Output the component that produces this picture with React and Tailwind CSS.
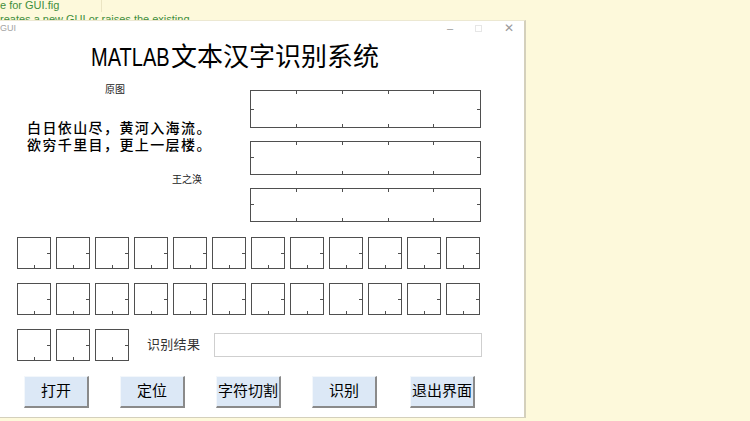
import React from "react";

const CJK = "font-['Liberation_Sans','Noto_Sans_CJK_SC',sans-serif]";

// plot area with inward tick marks, like an empty MATLAB axes
function Axes({ w, h, xs = [], ys = [], top = true, left = true }) {
  return (
    <div
      className="relative shrink-0 border border-[#4f4f4f] bg-white"
      style={{ width: w, height: h }}
    >
      <svg
        className="pointer-events-none absolute inset-0"
        width={w - 2}
        height={h - 2}
        stroke="#4f4f4f"
        strokeWidth="1"
      >
        {xs.map((x) => (
          <g key={"x" + x}>
            {top && <line x1={x + 0.5} y1={0} x2={x + 0.5} y2={3} />}
            <line x1={x + 0.5} y1={h - 2} x2={x + 0.5} y2={h - 5} />
          </g>
        ))}
        {ys.map((y) => (
          <g key={"y" + y}>
            {left && <line x1={0} y1={y + 0.5} x2={3} y2={y + 0.5} />}
            <line x1={w - 2} y1={y + 0.5} x2={w - 5} y2={y + 0.5} />
          </g>
        ))}
      </svg>
    </div>
  );
}

function CharBox() {
  return <Axes w={34} h={32} xs={[16]} ys={[15]} top={false} left={false} />;
}

function PushButton({ label, className = "" }) {
  return (
    <button
      className={
        "flex h-[32px] w-[65px] items-center justify-center border-t border-l border-t-[#f3f7fb] border-l-[#f3f7fb] border-r-2 border-b-2 border-r-[#8a8a8a] border-b-[#8a8a8a] bg-[#dce8f6] text-[15px] text-black " +
        className
      }
    >
      {label}
    </button>
  );
}

export default function App() {
  const row = Array.from({ length: 12 });

  return (
    <div
      className={
        "relative h-[421px] w-[750px] overflow-hidden bg-[#fdf9db] " + CJK
      }
    >
      {/* editor text behind the figure window */}
      <div className="flex h-[12px]">
        <div className="w-[102px] border-r border-[#ebe5c3] text-[11px] leading-[10px] text-[#3f8e3c]">
          e for GUI.fig
        </div>
      </div>
      <div className="h-[8px] whitespace-nowrap text-[11px] leading-[14px] text-[#3f8e3c]">
        reates a new GUI or raises the existing
      </div>

      {/* figure window */}
      <div className="absolute left-0 top-[20px] flex h-[398px] w-[526px] flex-col border-r-2 border-b border-t border-[#d4d0bc] border-t-[#ece8d2] bg-white">
        <div className="flex h-[14px] items-center justify-between text-[9px] leading-[14px] text-[#a3a3a3]">
          <span>GUI</span>
          <div className="flex items-center gap-[22px] pr-[10px] text-[#9a9a9a]">
            <span className="text-[11px]">–</span>
            <span className="h-[7px] w-[7px] border border-[#e6e6e6]" />
            <span className="text-[12px]">✕</span>
          </div>
        </div>

        <div className="flex whitespace-nowrap pl-[91px] pt-[7px] text-[26px] leading-[30px] text-black">
          <span className="inline-block w-[80px]">
            <span className="inline-block origin-left scale-x-[0.77]">
              MATLAB
            </span>
          </span>
          <span>文本汉字识别系统</span>
        </div>

        <div className="flex">
          <div className="w-[250px] shrink-0">
            <div className="mt-[11px] pl-[105px] text-[10px] leading-[14px] text-[#222]">
              原图
            </div>
            <div className="mt-[23px] pl-[27px] text-[14px] font-medium leading-[17px] tracking-[1.4px] text-black">
              <div>白日依山尽，黄河入海流。</div>
              <div>欲穷千里目，更上一层楼。</div>
            </div>
            <div className="mt-[20px] pl-[172px] text-[10px] leading-[12px] text-[#222]">
              王之涣
            </div>
          </div>
          <div className="flex flex-col gap-[13px] pt-[18px]">
            <Axes w={231} h={38} xs={[45, 91, 137, 182]} ys={[18]} />
            <Axes w={231} h={34} xs={[45, 91, 137, 182]} ys={[15]} />
            <Axes w={231} h={34} xs={[45, 91, 137, 182]} ys={[15]} />
          </div>
        </div>

        <div className="mt-[15px] flex flex-col gap-[14px] pl-[17px]">
          <div className="flex gap-[5px]">
            {row.map((_, i) => (
              <CharBox key={i} />
            ))}
          </div>
          <div className="flex gap-[5px]">
            {row.map((_, i) => (
              <CharBox key={i} />
            ))}
          </div>
          <div className="flex items-center gap-[5px]">
            <CharBox />
            <CharBox />
            <CharBox />
            <span className="ml-[13px] text-[13px] tracking-[0.3px] text-[#333]">
              识别结果
            </span>
            <div className="ml-[9px] h-[24px] w-[268px] border border-[#cfcfcf] bg-white" />
          </div>
        </div>

        <div className="mt-[15px] flex gap-[31px] pl-[24px]">
          <PushButton label="打开" />
          <PushButton label="定位" />
          <PushButton label="字符切割" />
          <PushButton label="识别" />
          <PushButton label="退出界面" className="ml-[2px]" />
        </div>
      </div>

      {/* command window text peeking out below */}
      <div className="absolute left-0 top-[418px] whitespace-nowrap pl-[4px] text-[11px] leading-[14px] text-[#333]">
        &gt;&gt; untitled GUI
      </div>
    </div>
  );
}
